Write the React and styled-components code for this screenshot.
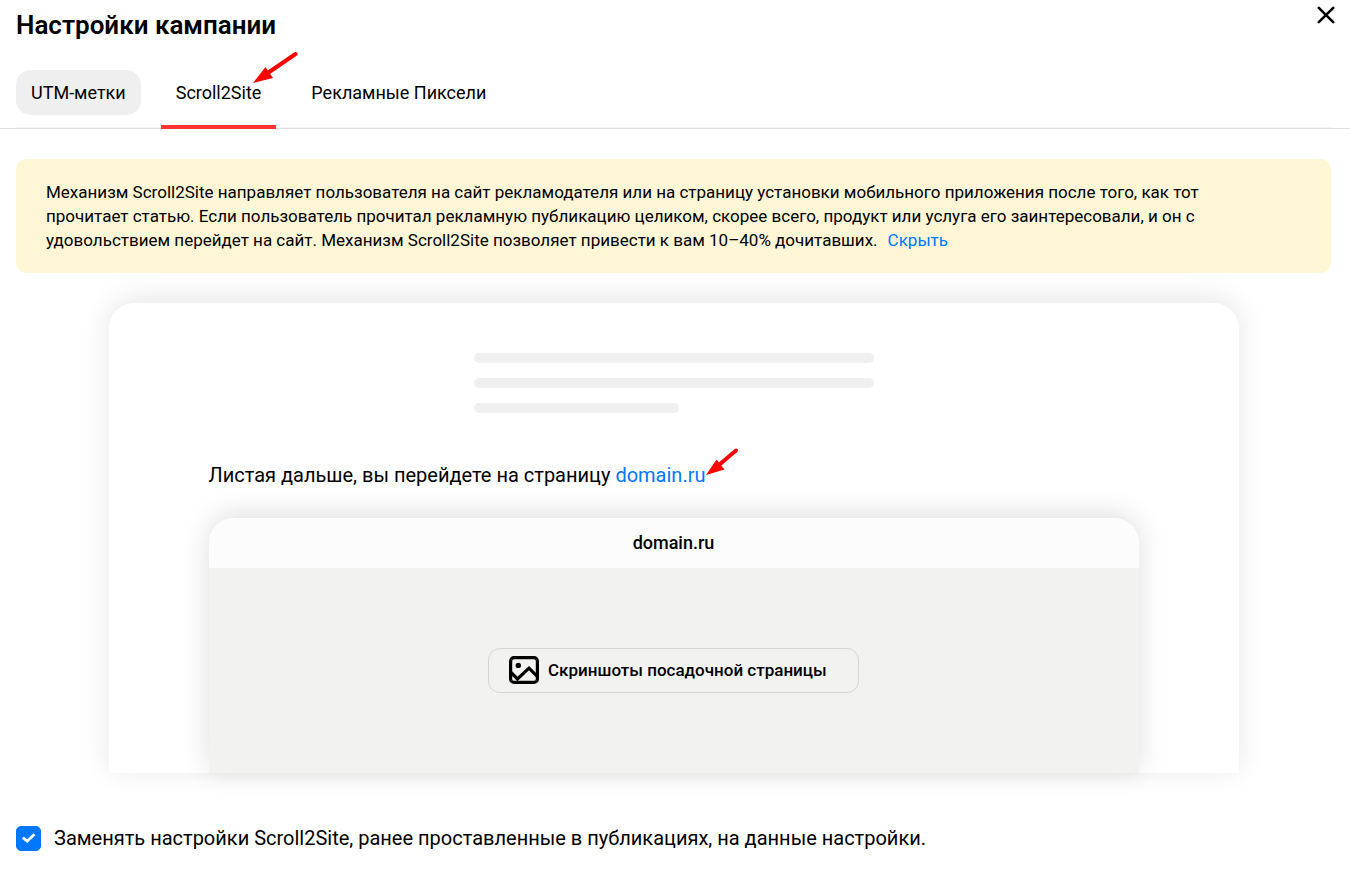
// Окно настроек кампании: вкладка Scroll2Site
import React, { useState } from 'react';
import styled, { createGlobalStyle } from 'styled-components';

const tabs = [
  { id: 'utm', label: 'UTM-метки' },
  { id: 'scroll', label: 'Scroll2Site' },
  { id: 'pixels', label: 'Рекламные Пиксели' },
];

const CloseIcon = () => (
  <svg width="18" height="18" viewBox="0 0 18 18" fill="none" aria-hidden="true">
    <path d="M1.8 1.8L16.2 16.2M16.2 1.8L1.8 16.2" stroke="#000" strokeWidth="2.6" strokeLinecap="round" />
  </svg>
);

const ImageIcon = () => (
  <svg width="30" height="28" viewBox="0 0 30 28" fill="none" aria-hidden="true">
    <rect x="1.6" y="1.6" width="26.8" height="24.8" rx="3.5" stroke="#000" strokeWidth="3.2" />
    <circle cx="9.3" cy="9.4" r="2.7" fill="#000" />
    <path d="M2 16.5L8.5 23L20 12.2L28.5 20.6" stroke="#000" strokeWidth="3.2" />
  </svg>
);

const CheckIcon = () => (
  <svg width="25" height="25" viewBox="0 0 25 25" fill="none" aria-hidden="true">
    <path d="M6.8 11.6L11.2 15.2L18.4 8.2" stroke="#fff" strokeWidth="2.8" />
  </svg>
);

const App = () => {
  const [activeTab, setActiveTab] = useState('scroll');
  const [hintOpen, setHintOpen] = useState(true);
  const [replace, setReplace] = useState(true);

  const hideHint = (e) => {
    e.preventDefault();
    setHintOpen(false);
  };

  return (
    <>
      <GlobalStyle />
      <Header>
        <Title>Настройки кампании</Title>
        <CloseButton type="button" aria-label="Закрыть">
          <CloseIcon />
        </CloseButton>
      </Header>

      <TabBar>
        <Tabs role="tablist">
          {tabs.map((tab) => (
            <Tab
              key={tab.id}
              type="button"
              role="tab"
              aria-selected={activeTab === tab.id}
              $active={activeTab === tab.id}
              onClick={() => setActiveTab(tab.id)}
            >
              <TabLabel $filled={tab.id === 'utm'}>{tab.label}</TabLabel>
              {tab.id === 'scroll' && (
                <TabArrow width="46" height="34" viewBox="0 0 46 34" aria-hidden="true">
                  <path d="M43.5 3L15 22.5" stroke="#f00" strokeWidth="4" strokeLinecap="round" />
                  <path d="M1 32L13.5 16L21 27Z" fill="#f00" />
                </TabArrow>
              )}
            </Tab>
          ))}
        </Tabs>
      </TabBar>

      <Main>
        {hintOpen && (
          <Hint>
            <HintText>
              Механизм Scroll2Site направляет пользователя на сайт рекламодателя или на страницу установки
              мобильного приложения после того, как тот прочитает статью. Если пользователь прочитал рекламную
              публикацию целиком, скорее всего, продукт или услуга его заинтересовали, и он с удовольствием
              перейдет на сайт. Механизм Scroll2Site позволяет привести к вам 10–40% дочитавших.
              <HideLink href="#hide" onClick={hideHint}>
                Скрыть
              </HideLink>
            </HintText>
          </Hint>
        )}

        <Preview>
          <Skeleton>
            <SkeletonLine />
            <SkeletonLine />
            <SkeletonLine $short />
          </Skeleton>
          <Caption>
            Листая дальше, вы перейдете на страницу{' '}
            <DomainLink href="#domain">
              domain.ru
              <LinkArrow width="34" height="30" viewBox="0 0 34 30" aria-hidden="true">
                <path d="M31 3.5L15 17" stroke="#f00" strokeWidth="4" strokeLinecap="round" />
                <path d="M1 28L11.5 12.5L19.5 22.5Z" fill="#f00" />
              </LinkArrow>
            </DomainLink>
          </Caption>
          <Site>
            <SiteHeader>domain.ru</SiteHeader>
            <SiteBody>
              <ScreenshotsButton type="button">
                <ImageIcon />
                Скриншоты посадочной страницы
              </ScreenshotsButton>
            </SiteBody>
          </Site>
        </Preview>

        <ReplaceLabel>
          <CheckBox>
            <CheckInput type="checkbox" checked={replace} onChange={(e) => setReplace(e.target.checked)} />
            {replace && <CheckIcon />}
          </CheckBox>
          Заменять настройки Scroll2Site, ранее проставленные в публикациях, на данные настройки.
        </ReplaceLabel>
      </Main>
    </>
  );
};

export default App;

// --- Styled Components ---

const GlobalStyle = createGlobalStyle`
  * {
    box-sizing: border-box;
  }

  body {
    margin: 0;
    background: #fff;
    color: #000;
    font-family: 'Roboto', 'Noto Sans', sans-serif;
    font-size: 18px;
  }

  button {
    padding: 0;
    border: 0;
    background: none;
    color: inherit;
    font: inherit;
    cursor: pointer;
  }

  a {
    color: #0077ff;
    text-decoration: none;
  }
`;

const Header = styled.header`
  display: flex;
  justify-content: space-between;
  align-items: flex-start;
  padding: 6px 15px 0 16px;
`;

const Title = styled.h1`
  margin: 0;
  padding-top: 3px;
  font-size: 26px;
  font-weight: 600;
  line-height: 32px;
`;

const CloseButton = styled.button`
  display: flex;
`;

const TabBar = styled.nav`
  margin-top: 29px;
  padding: 0 19px 0 16px;
  border-bottom: 1px solid #dedede;
`;

const Tabs = styled.div`
  display: flex;
  gap: 20px;
  height: 58px;
  box-shadow: inset 0 -1px #f4f4f4;
`;

const Tab = styled.button`
  position: relative;
  flex-shrink: 0;
  height: 59px;
  padding-bottom: 10px;
  border-bottom: 4px solid ${(props) => (props.$active ? '#ff3333' : 'transparent')};
`;

const TabLabel = styled.span`
  display: block;
  padding: 0 15px;
  border-radius: 15px;
  background: ${(props) => (props.$filled ? '#efefef' : 'transparent')};
  line-height: 45px;
  white-space: nowrap;
`;

const TabArrow = styled.svg`
  position: absolute;
  top: -19px;
  left: 91px;
  pointer-events: none;
`;

const Main = styled.main`
  padding: 30px 19px 20px 16px;
`;

const Hint = styled.section`
  margin-bottom: 30px;
  padding: 21px 30px;
  border-radius: 10px;
  background: #fff6d6;
`;

const HintText = styled.p`
  max-width: 1200px;
  margin: 0;
  font-size: 17px;
  line-height: 24px;
`;

const HideLink = styled.a`
  margin-left: 10px;
`;

const Preview = styled.section`
  max-width: 1130px;
  margin: 0 auto;
  padding: 50px 100px 0;
  border-radius: 25px 25px 0 0;
  background: #fff;
  box-shadow: 0 -4px 28px rgba(0, 0, 0, 0.1);
`;

const Skeleton = styled.div`
  display: flex;
  flex-direction: column;
  gap: 15px;
  max-width: 400px;
  margin: 0 auto;
`;

const SkeletonLine = styled.div`
  width: ${(props) => (props.$short ? '205px' : '100%')};
  height: 10px;
  border-radius: 5px;
  background: #f0f0f0;
`;

const Caption = styled.p`
  margin: 47px 0 28px;
  font-size: 20px;
  line-height: 30px;
`;

const DomainLink = styled.a`
  position: relative;
`;

const LinkArrow = styled.svg`
  position: absolute;
  top: -16px;
  left: 100%;
  pointer-events: none;
`;

const Site = styled.div`
  border-radius: 25px 25px 0 0;
  box-shadow: 0 -4px 28px rgba(0, 0, 0, 0.13);
`;

const SiteHeader = styled.div`
  border-radius: 25px 25px 0 0;
  background: #fcfcfc;
  font-weight: 500;
  line-height: 50px;
  text-align: center;
`;

const SiteBody = styled.div`
  display: flex;
  justify-content: center;
  padding: 80px 20px;
  background: #f2f2f0;
`;

const ScreenshotsButton = styled.button`
  display: flex;
  align-items: center;
  gap: 9px;
  min-width: 371px;
  height: 45px;
  && {
    padding: 0 20px 2px;
    border: 1px solid #d6d6d4;
    font-size: 17px;
    font-weight: 500;
  }
  border-radius: 12px;
`;

const ReplaceLabel = styled.label`
  display: flex;
  align-items: center;
  gap: 13px;
  margin-top: 50px;
  font-size: 20px;
  line-height: 30px;
`;

const CheckBox = styled.span`
  display: grid;

  > * {
    grid-area: 1 / 1;
  }

  svg {
    z-index: 1;
    pointer-events: none;
  }
`;

const CheckInput = styled.input`
  appearance: none;
  width: 25px;
  height: 25px;
  margin: 0;
  border: 1px solid ${(props) => (props.checked ? '#0077ff' : '#b8b8b8')};
  border-radius: 5px;
  background: ${(props) => (props.checked ? '#0077ff' : '#fff')};
`;
